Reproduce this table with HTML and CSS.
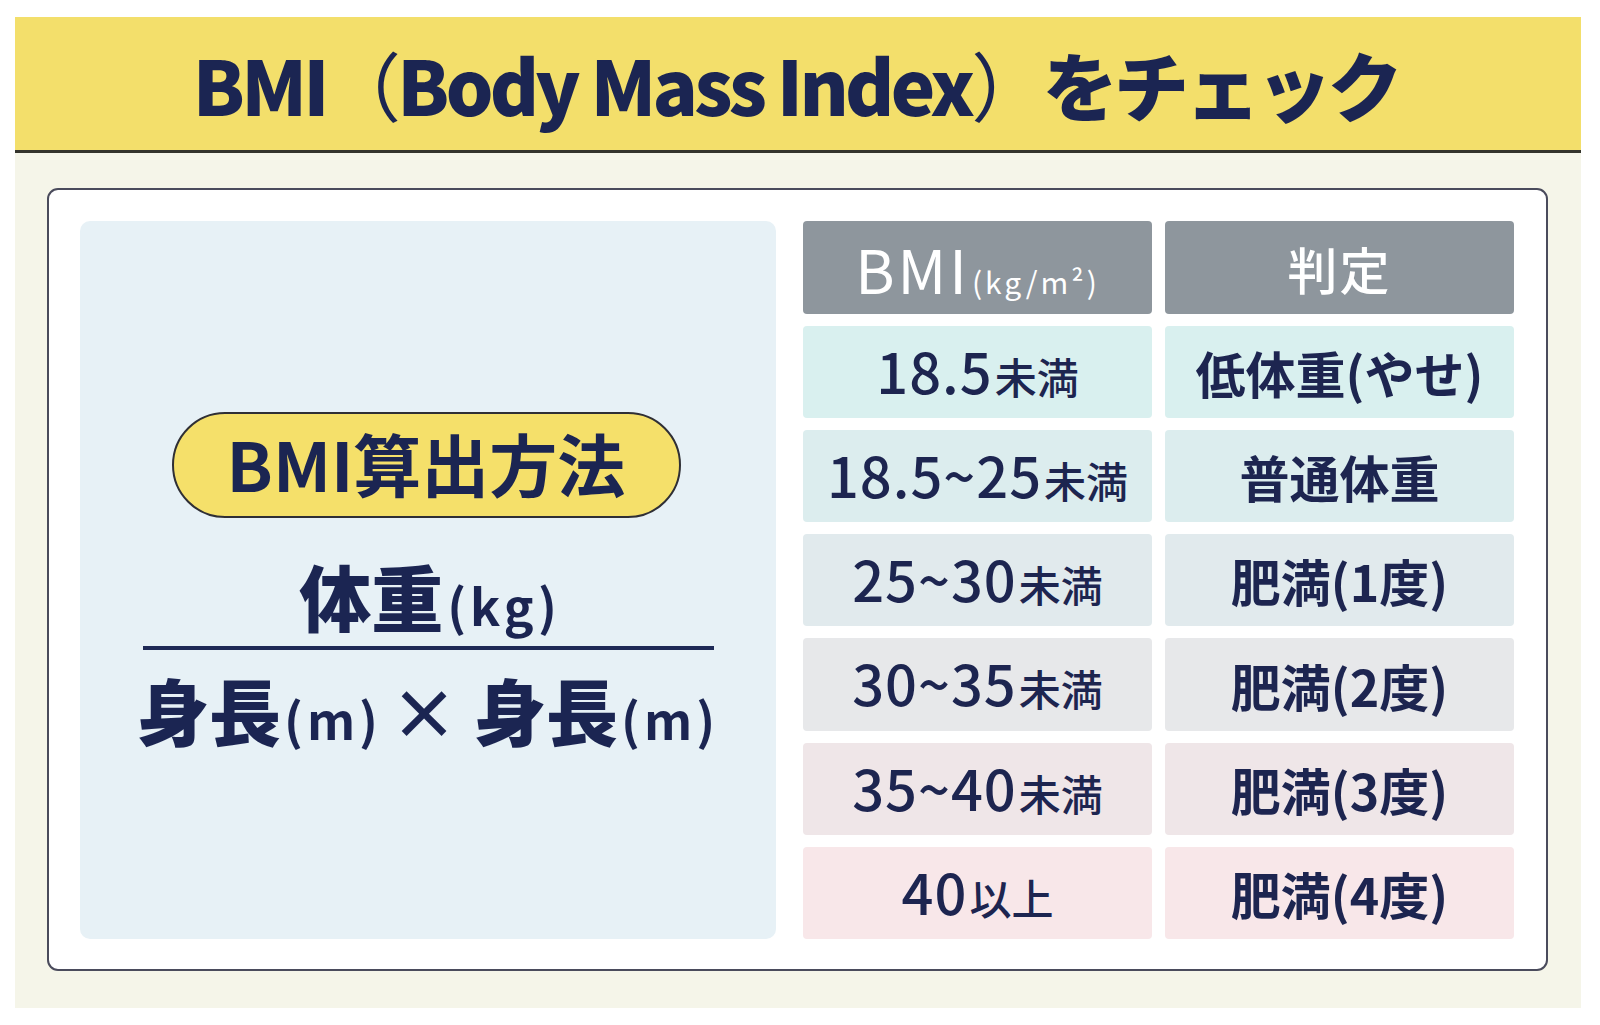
FILE: index.html
```html
<!DOCTYPE html>
<html lang="ja">
<head>
<meta charset="utf-8">
<title>BMI（Body Mass Index）をチェック</title>
<link rel="stylesheet" href="styles.css">
</head>
<body>
<div class="frame">
  <header class="banner">
    <h1 class="title">BMI<span class="paren">（</span>Body Mass Index<span class="paren">）</span>をチェック</h1>
  </header>
  <main class="stage">
    <section class="card">
      <div class="method">
        <div class="pill">BMI算出方法</div>
        <div class="fraction">
          <div class="numer"><span class="kanji">体重</span><span class="unit">(kg)</span></div>
          <div class="bar"></div>
          <div class="denom"><span class="kanji">身長</span><span class="unit">(m)</span><span class="times">×</span><span class="kanji">身長</span><span class="unit">(m)</span></div>
        </div>
      </div>
      <div class="table">
        <div class="th">BMI<span class="sub">(kg/m²)</span></div>
        <div class="th th-j">判定</div>

        <div class="td r1"><span class="num">18.5</span><span class="sm">未満</span></div>
        <div class="td r1 jp">低体重(やせ)</div>

        <div class="td r2"><span class="num">18.5~25</span><span class="sm">未満</span></div>
        <div class="td r2 jp">普通体重</div>

        <div class="td r3"><span class="num">25~30</span><span class="sm">未満</span></div>
        <div class="td r3 jp">肥満(1度)</div>

        <div class="td r4"><span class="num">30~35</span><span class="sm">未満</span></div>
        <div class="td r4 jp">肥満(2度)</div>

        <div class="td r5"><span class="num">35~40</span><span class="sm">未満</span></div>
        <div class="td r5 jp">肥満(3度)</div>

        <div class="td r6"><span class="num">40</span><span class="sm">以上</span></div>
        <div class="td r6 jp">肥満(4度)</div>
      </div>
    </section>
  </main>
</div>
</body>
</html>
```

FILE: styles.css
```css
html, body {
  margin: 0;
  padding: 0;
  background: #ffffff;
}

body {
  font-family: "Noto Sans CJK JP", "Noto Sans", sans-serif;
  color: #1c2551;
}

.frame {
  width: 1566px;
  margin: 17px 19px 0 15px;
  display: flex;
  flex-direction: column;
}

.banner {
  height: 133px;
  background: #f3df6b;
  border-bottom: 3px solid #34342c;
  display: flex;
  align-items: center;
  justify-content: center;
}

.title {
  margin: 0;
  font-size: 75px;
  font-weight: 900;
  line-height: 1;
  color: #1b2552;
  letter-spacing: -3.7px;
  padding-right: 4px;
  white-space: nowrap;
}

.title .paren {
  font-weight: 400;
}

.stage {
  background: #f5f5e9;
  height: 855px;
  padding: 35px 33px 0 32px;
  box-sizing: border-box;
}

.card {
  height: 783px;
  box-sizing: border-box;
  background: #ffffff;
  border: 2px solid #4a4b5c;
  border-radius: 11px;
  padding: 31px 32px 30px 31px;
  display: flex;
  gap: 27px;
}

.method {
  width: 696px;
  flex: none;
  background: #e7f1f6;
  border-radius: 10px;
  display: flex;
  flex-direction: column;
  align-items: center;
  justify-content: flex-start;
  padding-top: 191px;
  box-sizing: border-box;
}

.pill {
  width: 509px;
  height: 106px;
  box-sizing: border-box;
  border: 2px solid #2f2f35;
  border-radius: 53px;
  background: #f5e06a;
  display: flex;
  align-items: center;
  justify-content: center;
  font-size: 68px;
  font-weight: 700;
  line-height: 1;
  color: #1b2552;
  padding-bottom: 4px;
  margin-right: 4px;
}

.fraction {
  display: flex;
  flex-direction: column;
  align-items: stretch;
  margin-top: 41px;
  width: 571px;
}

.numer, .denom {
  display: flex;
  align-items: baseline;
  justify-content: center;
  font-size: 72px;
  font-weight: 900;
  line-height: 72px;
  color: #1b2552;
  white-space: nowrap;
}

.kanji, .unit, .times {
  flex: none;
}

.numer {
  padding-left: 4px;
}

.unit {
  font-size: 50px;
  font-weight: 700;
  letter-spacing: 4px;
  margin-left: 4px;
}

.denom .unit {
  letter-spacing: 4px;
  margin-left: 3px;
}

.times {
  font-size: 68px;
  font-weight: 700;
  margin: 0 16px 0 8px;
}

.bar {
  height: 4px;
  background: #1f2a56;
  margin: 6px 0 23px;
}

.table {
  flex: 1;
  display: grid;
  grid-template-columns: 1fr 1fr;
  grid-template-rows: 93px repeat(6, 1fr);
  column-gap: 13px;
  row-gap: 12px;
}

.th, .td {
  border-radius: 4px;
  display: flex;
  align-items: center;
  justify-content: center;
  line-height: 1;
  white-space: nowrap;
}

.th {
  background: #8e969d;
  color: #ffffff;
  font-size: 60px;
  font-weight: 400;
  align-items: baseline;
  padding-top: 17px;
  box-sizing: border-box;
  letter-spacing: 3px;
}

.th .sub {
  font-size: 30px;
  margin-left: 2px;
  letter-spacing: 3px;
}

.th-j {
  font-size: 50px;
  font-weight: 500;
  align-items: center;
  padding-top: 0;
  letter-spacing: 2px;
}

.td {
  color: #1d2550;
  font-weight: 500;
  align-items: baseline;
  padding-top: 16px;
  box-sizing: border-box;
}

.td .num {
  font-size: 56px;
  letter-spacing: 1px;
}

.td .sm {
  font-size: 42px;
  margin-left: 2px;
}

.td.jp {
  font-size: 50px;
  font-weight: 700;
  align-items: center;
  padding-top: 0;
}

.r1 { background: #d9f0ef; }
.r2 { background: #dcedee; }
.r3 { background: #e1eaed; }
.r4 { background: #e7e8ea; }
.r5 { background: #efe6e8; }
.r6 { background: #f8e7e9; }
```
